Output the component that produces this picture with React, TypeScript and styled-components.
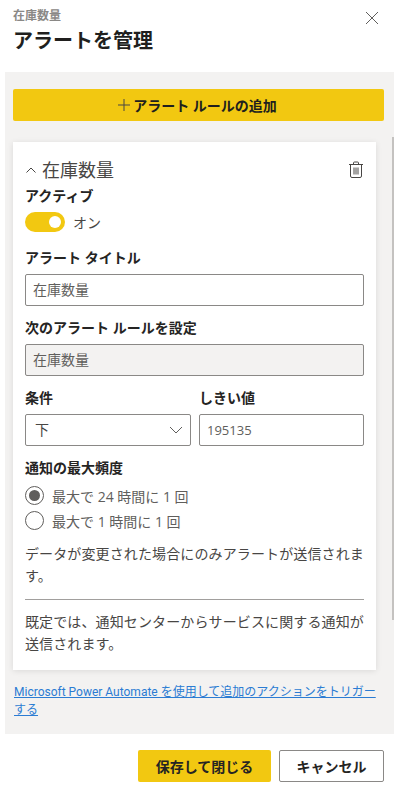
import { createGlobalStyle, styled } from 'styled-components'

const GlobalStyle = createGlobalStyle`
  html, body {
    margin: 0;
    padding: 0;
    background: #fff;
  }
  body {
    font-family: "Open Sans", "Noto Sans CJK JP", sans-serif;
    color: #252423;
    overflow: hidden;
  }
`

const Pane = styled.div`
  width: 404px;
  height: 792px;
  display: flex;
  flex-direction: column;
  box-sizing: border-box;
`

const Header = styled.header`
  height: 72px;
  padding: 8px 25px 0 13px;
  box-sizing: border-box;
  display: flex;
  justify-content: space-between;
  align-items: flex-start;
`

const Subtitle = styled.div`
  font-size: 12px;
  line-height: 16px;
  font-weight: 700;
  color: #8a8886;
`

const Title = styled.h1`
  margin: 2px 0 0;
  font-size: 20px;
  line-height: 30px;
  font-weight: 700;
  color: #201f1e;
`

const CloseIcon = styled.svg`
  width: 14px;
  height: 14px;
  margin-top: 3px;
  stroke: #605e5c;
  stroke-width: 1;
  fill: none;
`

const Body = styled.div`
  position: relative;
  margin-left: 5px;
  width: 389px;
  height: 662px;
  background: #f3f2f1;
  padding: 17px 10px 0 8px;
  box-sizing: border-box;
`

const Scrollbar = styled.div`
  position: absolute;
  right: 0;
  top: 65px;
  width: 2px;
  height: 483px;
  background: #c4c2c0;
`

const AddButton = styled.button`
  display: flex;
  justify-content: center;
  align-items: center;
  gap: 2px;
  width: 371px;
  height: 32px;
  border: 0;
  border-radius: 2px;
  background: #f2c811;
  font: inherit;
  font-size: 14px;
  font-weight: 700;
  color: #201f1e;
  padding: 0 3px 0 0;
`

const Card = styled.section`
  margin-top: 21px;
  width: 363px;
  height: 528px;
  background: #fff;
  padding: 15px 12px 0;
  box-sizing: border-box;
  box-shadow: 0 1px 6px rgba(0, 0, 0, 0.1);
`

const CardHead = styled.div`
  display: flex;
  align-items: center;
  height: 26px;
`

const CardTitle = styled.div`
  flex: 1;
  margin-left: 5px;
  font-size: 18px;
  line-height: 26px;
  color: #484644;
`

const Label = styled.div<{ $top?: number }>`
  font-size: 14px;
  line-height: 20px;
  font-weight: 700;
  color: #252423;
  margin-top: ${(p) => p.$top ?? 12}px;
`

const ToggleRow = styled.div`
  display: flex;
  align-items: center;
  gap: 8px;
  margin-top: 6px;
  height: 20px;
  font-size: 14px;
  color: #484644;
`

const Toggle = styled.div`
  width: 40px;
  height: 20px;
  border-radius: 10px;
  background: #f2c811;
  display: flex;
  align-items: center;
  justify-content: flex-end;
  padding-right: 4px;
  box-sizing: border-box;
`

const Knob = styled.div`
  width: 12px;
  height: 12px;
  border-radius: 50%;
  background: #fff;
`

const Field = styled.div<{ $disabled?: boolean }>`
  display: flex;
  align-items: center;
  justify-content: space-between;
  height: 32px;
  margin-top: 6px;
  padding: 0 7px 2px;
  box-sizing: border-box;
  border: 1px solid #8a8886;
  border-radius: 2px;
  background: ${(p) => (p.$disabled ? '#f3f2f1' : '#fff')};
  font-size: 14px;
  color: #605e5c;
`

const NumberField = styled(Field)`
  padding-bottom: 0;
  font-size: 13px;
`

const Columns = styled.div`
  display: grid;
  grid-template-columns: 166px 165px;
  column-gap: 8px;
  margin-top: 12px;
`

const ColLabel = styled(Label)`
  margin-top: 0;
`

const SelectValue = styled.span`
  margin-left: 2px;
  color: #484644;
`

const SelectChevron = styled.svg`
  width: 14px;
  height: 14px;
  margin-top: 2px;
  stroke: #605e5c;
  fill: none;
`

const Radios = styled.div`
  margin-top: 8px;
  display: flex;
  flex-direction: column;
  gap: 6px;
`

const RadioRow = styled.div`
  display: flex;
  align-items: center;
  gap: 8px;
  height: 19px;
  font-size: 14px;
  color: #605e5c;
`

const RadioCircle = styled.div`
  width: 19px;
  height: 19px;
  border-radius: 50%;
  border: 1px solid #605e5c;
  box-sizing: border-box;
  display: flex;
  align-items: center;
  justify-content: center;
`

const RadioDot = styled.div`
  width: 11px;
  height: 11px;
  border-radius: 50%;
  background: #605e5c;
`

const Note = styled.p<{ $top: number }>`
  margin: ${(p) => p.$top}px 0 0;
  font-size: 14px;
  line-height: 22px;
  letter-spacing: 0.12px;
  color: #484644;
`

const Divider = styled.hr`
  margin: 12px 0 0;
  border: 0;
  border-top: 1px solid #a19f9d;
`

const LinkText = styled.a`
  display: block;
  margin: 13px 0 0 1px;
  width: 370px;
  font-family: Roboto, "Noto Sans CJK JP", sans-serif;
  font-size: 12px;
  line-height: 18px;
  color: #2b7cd3;
  text-decoration: underline;
`

const Footer = styled.footer`
  display: flex;
  justify-content: flex-end;
  gap: 8px;
  padding: 16px 20px 0 0;
`

const FooterButton = styled.button<{ $primary?: boolean }>`
  height: 32px;
  width: ${(p) => (p.$primary ? 133 : 105)}px;
  padding: 0;
  border: ${(p) => (p.$primary ? '0' : '1px solid #8a8886')};
  border-radius: 2px;
  background: ${(p) => (p.$primary ? '#f2c811' : '#fff')};
  font: inherit;
  font-size: 14px;
  font-weight: 700;
  color: #252423;
`

export default function App() {
  return (
    <Pane>
      <GlobalStyle />
      <Header>
        <div>
          <Subtitle>在庫数量</Subtitle>
          <Title>アラートを管理</Title>
        </div>
        <CloseIcon viewBox="0 0 14 14">
          <path d="M1 1l12 12M13 1L1 13" />
        </CloseIcon>
      </Header>
      <Body>
        <Scrollbar />
        <AddButton>
          <svg width="14" height="14" viewBox="0 0 14 14" stroke="#484644" fill="none">
            <path d="M7 1v12M1 7h12" />
          </svg>
          アラート ルールの追加
        </AddButton>
        <Card>
          <CardHead>
            <svg width="12" height="12" viewBox="0 0 12 12" stroke="#484644" fill="none">
              <path d="M1.5 8.5L6 4l4.5 4.5" />
            </svg>
            <CardTitle>在庫数量</CardTitle>
            <svg width="16" height="18" viewBox="0 0 16 18" stroke="#484644" fill="none">
              <path d="M1 3.5h14M5.5 3.5V2a1 1 0 0 1 1-1h3a1 1 0 0 1 1 1v1.5M2.5 3.5V15a1.5 1.5 0 0 0 1.5 1.5h8a1.5 1.5 0 0 0 1.5-1.5V3.5M6 6.5v7M8 6.5v7M10 6.5v7" />
            </svg>
          </CardHead>
          <Label $top={3}>アクティブ</Label>
          <ToggleRow>
            <Toggle>
              <Knob />
            </Toggle>
            オン
          </ToggleRow>
          <Label $top={16}>アラート タイトル</Label>
          <Field>在庫数量</Field>
          <Label>次のアラート ルールを設定</Label>
          <Field $disabled>在庫数量</Field>
          <Columns>
            <div>
              <ColLabel>条件</ColLabel>
              <Field>
                <SelectValue>下</SelectValue>
                <SelectChevron viewBox="0 0 14 14">
                  <path d="M1 4l6 6 6-6" />
                </SelectChevron>
              </Field>
            </div>
            <div>
              <ColLabel>しきい値</ColLabel>
              <NumberField>195135</NumberField>
            </div>
          </Columns>
          <Label>通知の最大頻度</Label>
          <Radios>
            <RadioRow>
              <RadioCircle>
                <RadioDot />
              </RadioCircle>
              最大で 24 時間に 1 回
            </RadioRow>
            <RadioRow>
              <RadioCircle />
              最大で 1 時間に 1 回
            </RadioRow>
          </Radios>
          <Note $top={13}>データが変更された場合にのみアラートが送信されます。</Note>
          <Divider />
          <Note $top={11}>既定では、通知センターからサービスに関する通知が送信されます。</Note>
        </Card>
        <LinkText>Microsoft Power Automate を使用して追加のアクションをトリガーする</LinkText>
      </Body>
      <Footer>
        <FooterButton $primary>保存して閉じる</FooterButton>
        <FooterButton>キャンセル</FooterButton>
      </Footer>
    </Pane>
  )
}
